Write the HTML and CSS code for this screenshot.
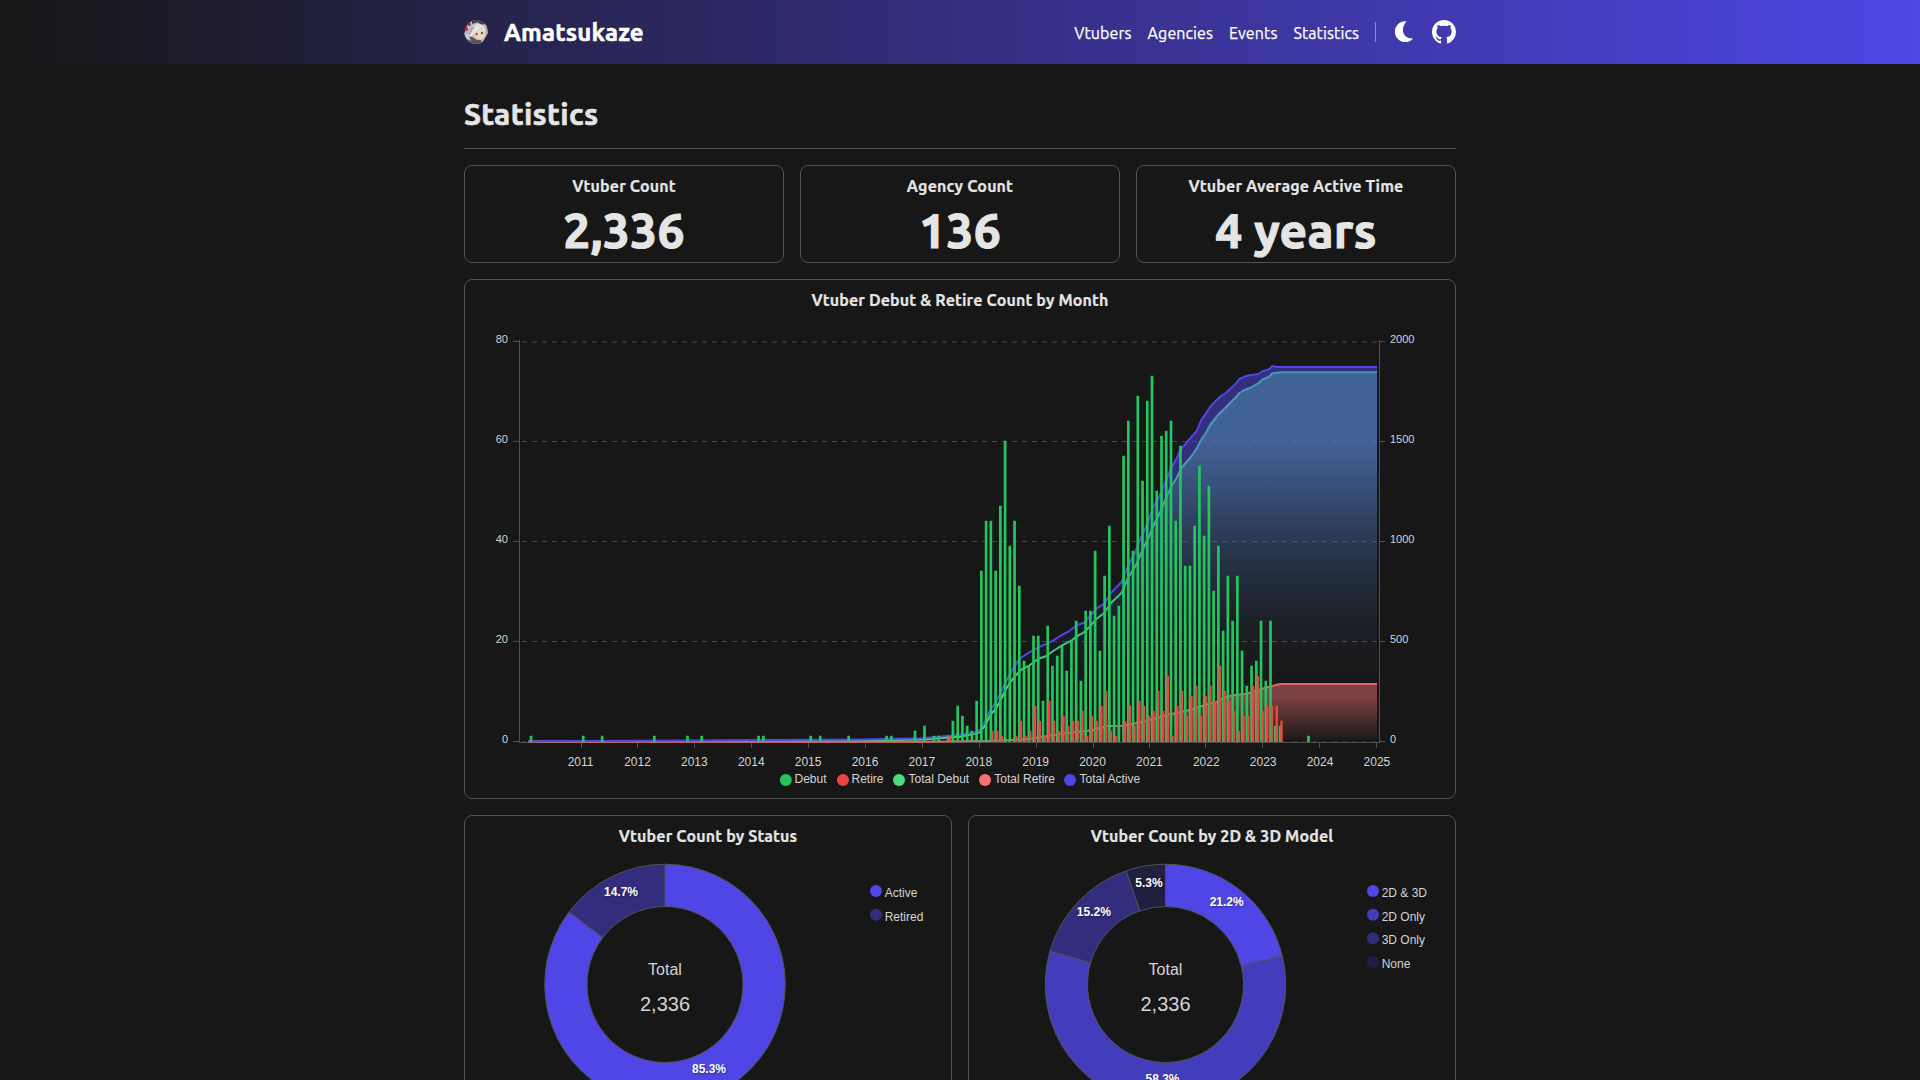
FILE: index.html
```html
<!DOCTYPE html>
<html lang="en">
<head>
<meta charset="utf-8">
<title>Statistics | Amatsukaze</title>
<link rel="stylesheet" href="styles.css">
</head>
<body>
<header class="topbar">
  <div class="container topbar-inner">
    <a class="brand">
      <svg class="avatar" viewBox="0 0 24 24">
        <defs><clipPath id="face"><circle cx="12" cy="12" r="12"/></clipPath></defs>
        <g clip-path="url(#face)">
          <path d="M4 4 9 0h9l5 5 1 8-4 7-3 4H8l-5-3-3-7z" fill="#b9b8bf"/>
          <path d="M8 0h9l4 4-4 1-3-3-6 2z" fill="#3f3d46"/>
          <path d="M0 8 5 2l2 2-4 7-3-1z" fill="#a8322f"/>
          <path d="M3 5l3 2-2 2z" fill="#e9e4e4"/>
          <path d="M10 10l5-2 6 2 0 6-4 4-5-2-3-4z" fill="#ecd6bd"/>
          <path d="M7 8q5-6 12-3l3 6-5-3-6 4-4 5-3-2z" fill="#e4e3e9"/>
          <path d="M7 8l4-2-5 9-2-1z" fill="#a9a8b2"/>
          <circle cx="12.5" cy="14" r="1.2" fill="#80583f"/>
          <circle cx="18" cy="13" r="1.2" fill="#80583f"/>
          <path d="M3 16l5 1 5 3 4 0 1 4H7l-5-4z" fill="#565459"/>
          <path d="M10 19l4 2-3 1z" fill="#a8322f"/>
          <path d="M1 13l4 3 2 5-4-2z" fill="#d0cfd6"/>
        </g>
      </svg>
      <span class="brand-name">Amatsukaze</span>
    </a>
    <nav class="nav">
      <a class="link">Vtubers</a>
      <a class="link">Agencies</a>
      <a class="link">Events</a>
      <a class="link">Statistics</a>
      <span class="divider"></span>
      <svg class="icon" viewBox="0 0 24 24"><path fill="#fff" d="M14.6 1.4A10.4 10.4 0 1 0 21.2 18.4C12 19.5 7 9.5 14.6 1.4Z"/></svg>
      <svg class="icon" viewBox="0 0 16 16"><path fill="#fff" d="M8 0C3.58 0 0 3.58 0 8c0 3.54 2.29 6.53 5.47 7.59.4.07.55-.17.55-.38 0-.19-.01-.82-.01-1.49-2.01.37-2.53-.49-2.69-.94-.09-.23-.48-.94-.82-1.13-.28-.15-.68-.52-.01-.53.63-.01 1.08.58 1.23.82.72 1.21 1.87.87 2.33.66.07-.52.28-.87.51-1.07-1.78-.2-3.64-.89-3.64-3.95 0-.87.31-1.59.82-2.15-.08-.2-.36-1.02.08-2.12 0 0 .67-.21 2.2.82.64-.18 1.32-.27 2-.27s1.36.09 2 .27c1.53-1.04 2.2-.82 2.2-.82.44 1.1.16 1.92.08 2.12.51.56.82 1.27.82 2.15 0 3.07-1.87 3.75-3.65 3.95.29.25.54.73.54 1.48 0 1.07-.01 1.93-.01 2.2 0 .21.15.46.55.38A8.01 8.01 0 0 0 16 8c0-4.42-3.58-8-8-8z"/></svg>
    </nav>
  </div>
</header>
<main class="container">
  <h1 class="page-title">Statistics</h1>
  <section class="cards three">
    <div class="card"><h2>Vtuber Count</h2><p class="figure">2,336</p></div>
    <div class="card"><h2>Agency Count</h2><p class="figure">136</p></div>
    <div class="card"><h2>Vtuber Average Active Time</h2><p class="figure">4 years</p></div>
  </section>
  <section class="card timeline">
    <h2>Vtuber Debut &amp; Retire Count by Month</h2>
    <svg class="chart" id="timeline" viewBox="473 312 974 478"></svg>
  </section>
  <section class="cards two">
    <div class="card"><h2>Vtuber Count by Status</h2><svg class="chart" id="status" viewBox="473 848 470 280"></svg></div>
    <div class="card"><h2>Vtuber Count by 2D &amp; 3D Model</h2><svg class="chart" id="model" viewBox="977 848 470 280"></svg></div>
  </section>
</main>
<script src="script.js"></script>
</body>
</html>
```
FILE: styles.css
```css
* { box-sizing: border-box; }
html, body { height: 100%; margin: 0; overflow: hidden; }
body { background: #171717; color: #e5e5e5; font-family: Ubuntu, "Noto Sans", sans-serif; font-size: 16px; line-height: 24px; }
h1, h2, p { margin: 0; }
.container { width: 992px; margin: 0 auto; }
.topbar { height: 64px; background: linear-gradient(to right, #171717, #4f46e5); color: #fff; }
.topbar-inner { height: 100%; display: flex; align-items: center; justify-content: space-between; }
.brand { display: flex; align-items: center; gap: 16px; }
.avatar { width: 24px; height: 24px; display: block; }
.brand-name { padding-top: 1px; font-size: 24px; font-weight: 700; line-height: 32px; letter-spacing: .2px; -webkit-text-stroke: .5px; }
.nav { display: flex; align-items: center; gap: 16px; }
.link { padding-top: 1px; font-size: 16px; white-space: nowrap; letter-spacing: .1px; -webkit-text-stroke: .25px; }
.divider { width: 1px; height: 20px; background: #8d87dd; }
.icon { width: 24px; height: 24px; display: block; }
.page-title { margin: 32px 0 16px; padding-bottom: 16px; border-bottom: 1px solid #525252; font-size: 30px; line-height: 36px; font-weight: 700; letter-spacing: .3px; -webkit-text-stroke: .6px; }
.cards { display: grid; gap: 16px; }
.three { grid-template-columns: repeat(3, 1fr); }
.two { grid-template-columns: repeat(2, 1fr); }
.card { border: 1px solid #525252; border-radius: 8px; padding: 8px; text-align: center; }
.card h2 { font-size: 16px; line-height: 24px; font-weight: 600; white-space: nowrap; letter-spacing: .13px; -webkit-text-stroke: .2px; }
.figure { margin-top: 8px; font-size: 48px; line-height: 48px; font-weight: 700; letter-spacing: .3px; -webkit-text-stroke: 1.1px; }
.timeline { margin: 16px 0; }
.chart { display: block; width: 100%; }
.chart text { font-family: "Liberation Sans", Arial, sans-serif; font-size: 12px; fill: #d4d4d4; }
.chart .scale { font-size: 11px; }
.chart .mid { text-anchor: middle; }
.chart .end { text-anchor: end; }
.chart .total-label { font-size: 16px; }
.chart .total { font-size: 20px; }
.chart .share { font-weight: 700; fill: #fff; text-anchor: middle; text-shadow: 1px 1px 2px rgba(0, 0, 0, .4); }
.grid { stroke: #484848; stroke-dasharray: 5 5; }
.axis { stroke: #505050; fill: none; }
.line { fill: none; stroke-width: 2; stroke-linejoin: round; }
.slice { stroke: #525252; stroke-width: 1; }
```
FILE: script.js
```js
const X0 = 580.6, STEP = 4.74, BASE = 742;

// Month number counted from January 2011 -> vtubers debuting / retiring in it.
const early = { '-11': 1, 0: 1, 4: 1, 15: 1, 22: 1, 25: 1, 37: 1, 38: 1, 48: 1, 50: 1, 56: 1, 64: 1, 65: 1, 70: 2, 72: 3, 74: 1, 75: 1, 77: 1, 153: 1 };
const debut = [4, 7, 5, 3, 2, 8, 34, 44, 44, 34, 47, 60, 39, 44, 31, 16, 15, 21, 21, 8, 23, 15, 17, 19, 14, 20, 24, 12, 26, 26, 38, 18, 33, 43, 25, 27, 57, 64, 38, 69, 52, 68, 73, 50, 61, 62, 64, 44, 59, 35, 35, 43, 55, 41, 51, 30, 39, 22, 33, 24, 33, 18, 11, 15, 16, 24, 12, 24, 3, 3];
const retire = [2, 2, 1, 0, 0, 1, 4, 1, 2, 7, 4, 1, 8, 4, 2, 5, 3, 4, 4, 6, 1, 5, 4, 7, 10, 2, 1, 0, 4, 7, 3, 8, 7, 5, 6, 10, 6, 13, 1, 7, 10, 5, 9, 11, 5, 9, 11, 8, 15, 10, 8, 6, 2, 5, 5, 11, 13, 6, 7, 7, 7, 4];

const bar = (i, v, dx, w) => v ? `M${(X0 + STEP * (i + .5) + dx).toFixed(2)} ${BASE}v${-5 * v - 1.3}h${w}v${5 * v + 1.3}z` : '';
const debutPath = Object.entries(early).map(([i, v]) => bar(+i, v, -1.1, 2.7)).join('') + debut.map((v, k) => bar(78 + k, v, -1.1, 2.7)).join('');
const retirePath = bar(77, 1, .5, 2.5) + retire.map((v, k) => bar(86 + k, v, .5, 2.5)).join('');

// Cumulative curves.
const part = (ox, oy, pts) => pts.map(([x, y]) => [ox + x / 3, oy + y / 3]);
const active = [[528.3, 741.2], [700, 740.5], [860, 739.5], [922, 738.3],
  ...part(960, 540, [[0, 584], [50, 577], [58, 572], [75, 545], [88, 515], [107, 487], [120, 462], [135, 430], [150, 402], [164, 378], [180, 355], [207, 338], [240, 320], [262, 311], [280, 301], [305, 285], [325, 275], [350, 256], [372, 248], [391, 228], [410, 205], [434, 190], [450, 162], [485, 125], [505, 75], [525, 38], [540, 0]]),
  ...part(960, 320, [[548, 643], [565, 603], [580, 560], [598, 530], [618, 482], [633, 445], [650, 415], [661, 390], [680, 367], [710, 332], [725, 298], [738, 280], [752, 258]]),
  ...part(1200, 320, [[60, 230], [75, 221], [90, 207], [103, 196], [118, 177], [135, 169], [150, 166], [175, 162], [188, 153], [205, 149], [217, 138], [230, 141], [531, 141]])];
const debuts = [[528.3, 741.6], [700, 741], [860, 740.5], [922, 739.5],
  ...part(960, 540, [[0, 590], [50, 580], [60, 576], [75, 557], [92, 523], [107, 507], [121, 482], [135, 452], [150, 428], [164, 410], [182, 390], [207, 377], [235, 356], [260, 348], [275, 336], [305, 317], [334, 302], [350, 289], [372, 277], [391, 258], [410, 236], [432, 220], [452, 190], [485, 158], [505, 112], [528, 75], [545, 35], [562, 0]]),
  ...part(960, 320, [[570, 643], [580, 618], [598, 582], [618, 535], [635, 497], [650, 473], [665, 443], [695, 408], [710, 385], [725, 357], [738, 338], [752, 312], [780, 278]]),
  ...part(1200, 320, [[75, 265], [90, 249], [105, 234], [118, 219], [135, 209], [150, 204], [175, 190], [188, 178], [205, 172], [217, 160], [245, 157], [531, 157]])];
const retires = [[528.3, 741.8], [922, 741.7],
  ...part(960, 540, [[0, 604], [100, 602], [200, 598], [240, 592], [300, 582], [400, 570], [440, 558], [490, 557], [560, 543], [620, 525], [660, 517], [700, 506], [740, 493], [775, 484]]),
  ...part(1200, 550, [[60, 448], [80, 440], [100, 436], [140, 431], [175, 419], [205, 411], [240, 402], [531, 402]])];
const str = p => p.map(q => q.map(n => n.toFixed(1)).join(',')).join(' ');
const floor = ' 1377,742 528.3,742';

const fade = (id, color, stops) => `<linearGradient id="${id}" gradientUnits="userSpaceOnUse" x1="0" x2="0" y1="342" y2="742">${stops.map(([y, a]) => `<stop offset="${(y - 342) / 400}" stop-color="${color}" stop-opacity="${a}"/>`).join('')}</linearGradient>`;

let s = '<defs>' +
  fade('blue', 'rgb(80,123,194)', [[440, .75], [487, .58], [520, .42], [550, .31], [583, .2], [617, .1], [650, .04], [700, 0]]) +
  fade('violet', '#4f46e5', [[460, .5], [520, .36], [583, .18], [650, .05], [700, 0]]) +
  fade('rose', '#f87171', [[698, .46], [742, 0]]) + '</defs>';
for (let v = 0; v <= 4; v++) s += `<path class="grid" d="M522 ${742 - 100 * v - (v % 4 ? .5 : 0)}H1379"/>`;
s += `<path class="axis" d="M519.5 340V742M1379.5 340V742M519 742.5H1380"/>`;
for (let v = 0; v <= 4; v++) {
  const y = 741.5 - 100 * v;
  s += `<path class="axis" d="M513 ${y}h6M1380 ${y}h5"/><text class="scale end" x="508" y="${743 - 100 * v}">${20 * v}</text><text class="scale" x="1390" y="${743 - 100 * v}">${500 * v}</text>`;
}
for (let k = 0; k < 15; k++) {
  const x = X0 + 56.88 * k;
  s += `<path class="axis" d="M${Math.round(x) + .5 - (k > 10 ? 1 : 0)} 743v5"/><text class="mid" x="${x}" y="766">${2011 + k}</text>`;
}
s += `<polygon fill="url(#violet)" points="${str(active)} ${str([...debuts].reverse())}"/>
<polygon fill="url(#blue)" points="${str(debuts)}${floor}"/>
<polygon fill="url(#rose)" points="${str(retires)}${floor}"/>
<polyline class="line" stroke="url(#debutline)" points="${str(debuts)}"/>
<polyline class="line" stroke="#e06666" points="${str(retires)}"/>
<polyline class="line" stroke="#4f46e5" points="${str(active)}"/>
<path fill="#22c55e" d="${debutPath}"/><path fill="#ef4444" d="${retirePath}"/>
<defs><linearGradient id="debutline" gradientUnits="userSpaceOnUse" x1="0" x2="0" y1="372" y2="742"><stop offset="0" stop-color="#4a94b8"/><stop offset=".35" stop-color="#4aa0a8"/><stop offset=".7" stop-color="#3fc47c"/><stop offset="1" stop-color="#4ade80"/></linearGradient></defs>`;
for (const [cx, tx, c, t] of [[785.8, 794.5, '#22c55e', 'Debut'], [843, 851.5, '#ef4444', 'Retire'], [899, 908.5, '#4ade80', 'Total Debut'], [985, 994.3, '#f87171', 'Total Retire'], [1070, 1079.5, '#4f46e5', 'Total Active']])
  s += `<circle cx="${cx}" cy="780" r="6" fill="${c}"/><text x="${tx}" y="783">${t}</text>`;
document.getElementById('timeline').innerHTML = s;

function donut(id, cx, slices, legendX) {
  const cy = 984.5, R = 120.3, r = 78;
  const at = (f, q) => `${(cx + q * Math.sin(2 * Math.PI * f)).toFixed(2)} ${(cy - q * Math.cos(2 * Math.PI * f)).toFixed(2)}`;
  let f = 0, out = '', labels = '';
  slices.forEach(([name, share, color, lx, ly], k) => {
    const e = f + share / 100, big = share > 50 ? 1 : 0;
    out += `<path class="slice" fill="${color}" d="M${at(f, R)}A${R} ${R} 0 ${big} 1 ${at(e, R)}L${at(e, r)}A${r} ${r} 0 ${big} 0 ${at(f, r)}Z"/>`;
    labels += `<text class="share" x="${lx}" y="${ly}">${share}%</text><circle cx="${legendX}" cy="${891 + 23.67 * k}" r="6" fill="${color}"/><text x="${legendX + 8.7}" y="${Math.round(897 + 23.6 * k)}">${name}</text>`;
    f = e;
  });
  document.getElementById(id).innerHTML = out + labels +
    `<text class="mid total-label" x="${cx}" y="975">Total</text><text class="mid total" x="${cx}" y="1011">2,336</text>`;
}
donut('status', 665, [['Active', 85.3, '#4f46e5', 709, 1073], ['Retired', 14.7, '#332d7d', 621, 896]], 876);
donut('model', 1165.5, [['2D & 3D', 21.2, '#4f46e5', 1226.7, 906], ['2D Only', 58.3, '#443dbb', 1162.5, 1083], ['3D Only', 15.2, '#332d7d', 1093.8, 916], ['None', 5.3, '#211f40', 1149, 887]], 1373);
```
